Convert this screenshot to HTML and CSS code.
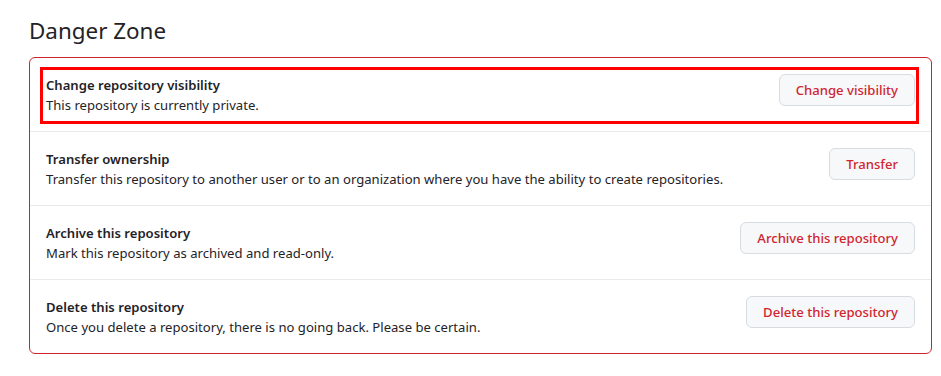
FILE: index.html
```html
<!DOCTYPE html>
<html lang="en">
<head>
  <meta charset="UTF-8">
  <meta name="viewport" content="width=device-width, initial-scale=1.0">
  <title>Danger Zone</title>
  <link rel="stylesheet" href="styles.css">
</head>
<body>
  <div id="settings">
    <h2 class="subhead">Danger Zone</h2>
    <div class="danger-box">
      <div class="danger-row highlighted">
        <div class="row-text">
          <strong>Change repository visibility</strong>
          <p>This repository is currently private.</p>
        </div>
        <button class="btn-danger">Change visibility</button>
      </div>
      <div class="danger-row">
        <div class="row-text">
          <strong>Transfer ownership</strong>
          <p>Transfer this repository to another user or to an organization where you have the ability to create repositories.</p>
        </div>
        <button class="btn-danger">Transfer</button>
      </div>
      <div class="danger-row">
        <div class="row-text">
          <strong>Archive this repository</strong>
          <p>Mark this repository as archived and read-only.</p>
        </div>
        <button class="btn-danger">Archive this repository</button>
      </div>
      <div class="danger-row">
        <div class="row-text">
          <strong>Delete this repository</strong>
          <p>Once you delete a repository, there is no going back. Please be certain.</p>
        </div>
        <button class="btn-danger">Delete this repository</button>
      </div>
    </div>
  </div>
</body>
</html>
```

FILE: styles.css
```css
body {
  font-family: 'Noto Sans', 'Open Sans', sans-serif;
  font-size: 13.1px;
  color: #1f2328;
  background-color: #ffffff;
  margin: 0;
  padding: 0;
}

#settings {
  padding: 16px 9px 0 29px;
}

.subhead {
  font-size: 22.4px;
  font-weight: 400;
  line-height: 30px;
  margin: 0 0 11px 0;
}

.danger-box {
  border: 1px solid #cf222e;
  border-radius: 6px;
}

.danger-row {
  position: relative;
  display: flex;
  align-items: flex-start;
  justify-content: space-between;
  padding: 16px;
  border-top: 1px solid #e8eaed;
}

.danger-row:first-child {
  border-top: none;
}

/* annotation frame drawn over the first row */
.highlighted::after {
  content: "";
  position: absolute;
  top: 9px;
  bottom: 7px;
  left: 10px;
  right: 12px;
  border: 3px solid #ff0000;
  pointer-events: none;
}

.row-text {
  padding-top: 1px;
}

.row-text strong {
  display: block;
  font-weight: 600;
  line-height: 21px;
}

.row-text p {
  margin: 0;
  line-height: 19px;
}

.btn-danger {
  font-family: inherit;
  font-size: 13.1px;
  font-weight: 500;
  color: #d1242f;
  background-color: #f6f8fa;
  border: 1px solid #d8dce1;
  border-radius: 6px;
  height: 32px;
  padding: 0 16px;
  cursor: pointer;
  white-space: nowrap;
}
```
